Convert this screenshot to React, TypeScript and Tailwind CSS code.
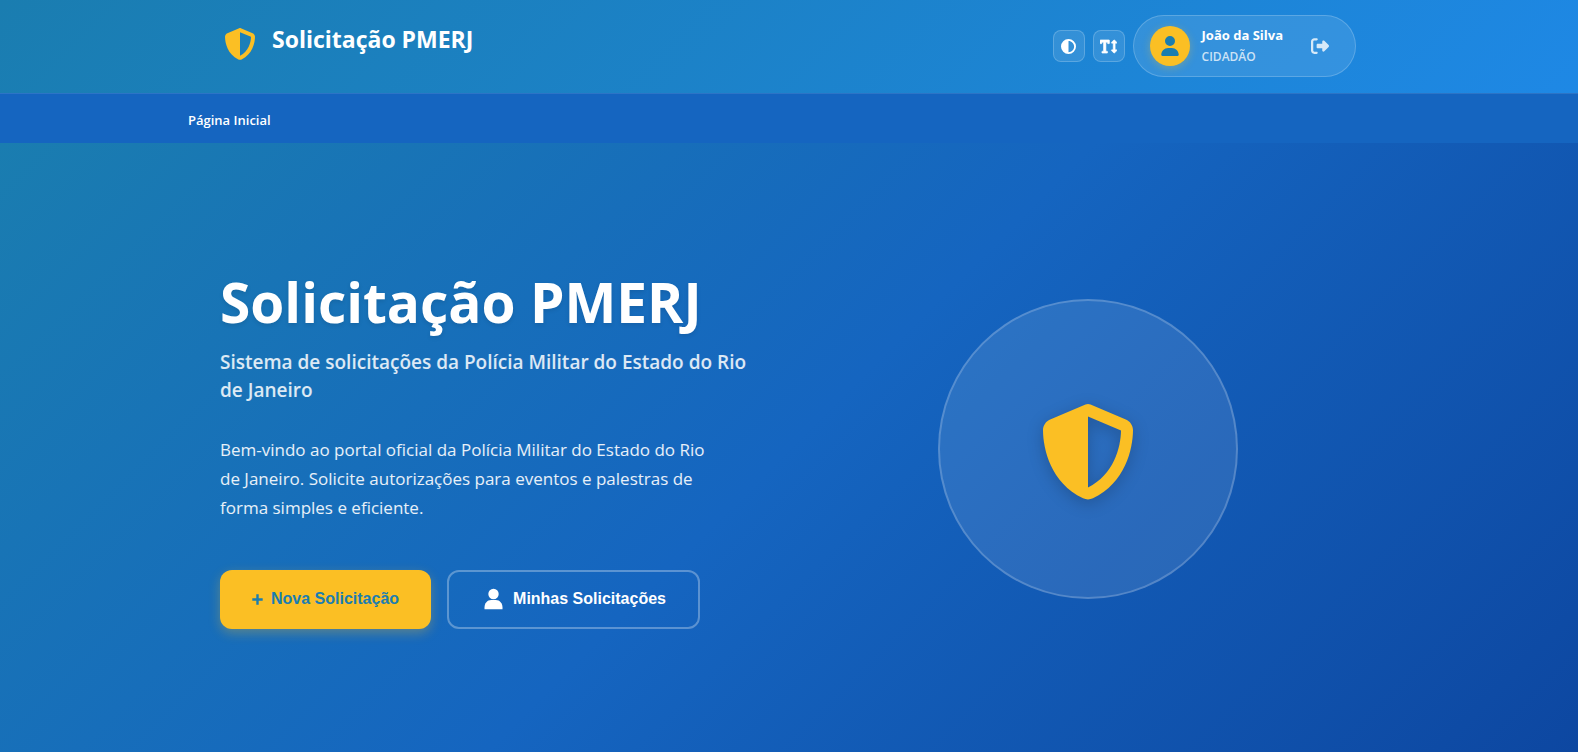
import { FaTextHeight } from "react-icons/fa";
import { FaCircleHalfStroke, FaRightFromBracket, FaShieldHalved, FaUser } from "react-icons/fa6";

const toolButton =
  "flex size-8 items-center justify-center rounded-lg border border-white/20 bg-white/10 text-white";

function PlusIcon() {
  return (
    <svg viewBox="0 0 11 11" className="size-[11px]" fill="currentColor" aria-hidden="true">
      <path d="M4.3 0.3h2.4v4h4v2.4h-4v4H4.3v-4h-4V4.3h4z" />
    </svg>
  );
}

function PersonIcon() {
  return (
    <svg viewBox="0 0 24 24" className="size-6" fill="currentColor" aria-hidden="true">
      <circle cx="12.5" cy="7" r="5.2" />
      <path d="M3.5 22.2v-1.7c0-4.3 2.8-7.6 6.6-7.6h4.8c3.8 0 6.6 3.3 6.6 7.6v1.7z" />
    </svg>
  );
}

function Header() {
  return (
    <header className="bg-[linear-gradient(135deg,#1a7db0,#1e88e5)] pr-0.5">
      <div className="mx-auto flex max-w-[1200px] items-center justify-between px-8 pt-[15px] pb-4">
        <a href="#" className="flex items-center gap-3 text-white">
          <span className="flex size-10 items-center justify-center text-[#fbbf24]">
            <FaShieldHalved className="mb-1 size-8" />
          </span>
          <span className="pb-3.5 text-[23px] leading-8 font-bold">Solicitação PMERJ</span>
        </a>
        <div className="flex items-center gap-2">
          <button type="button" aria-label="Alto contraste" className={toolButton}>
            <FaCircleHalfStroke className="size-[15px]" />
          </button>
          <button type="button" aria-label="Tamanho do texto" className={toolButton}>
            <FaTextHeight className="size-[17px] stroke-current stroke-[20px]" />
          </button>
          <div className="flex items-center gap-3 rounded-full border border-white/20 bg-white/10 py-2 pr-[18px] pl-4">
            <span className="flex size-10 items-center justify-center rounded-full bg-[#fbbf24] text-xl text-[#1a7db0] shadow-[0_2px_8px_rgba(251,191,36,0.3)]">
              <FaUser />
            </span>
            <div className="flex flex-col">
              <span className="text-[13px] leading-[22px] font-bold text-white">João da Silva</span>
              <span className="text-xs leading-[22px] font-semibold text-white/75">CIDADÃO</span>
            </div>
            <button type="button" aria-label="Sair" className="ml-2 p-2 text-lg text-white/80">
              <FaRightFromBracket />
            </button>
          </div>
        </div>
      </div>
    </header>
  );
}

function Hero() {
  return (
    <main className="flex flex-1 items-center bg-[linear-gradient(135deg,#1a7db0,#1565c0_50%,#0d47a1)] pt-0.5 pr-0.5">
      <div className="mx-auto grid w-full max-w-[1200px] grid-cols-2 items-center gap-16 px-8">
        <div className="text-white">
          <h1 className="mb-[13px] text-[55px] leading-[66px] font-bold text-shadow-[0_2px_4px_rgba(0,0,0,0.1)]">
            Solicitação PMERJ
          </h1>
          <h2 className="mb-[31px] text-[19px] leading-7 font-semibold text-white/85">
            Sistema de solicitações da Polícia Militar do Estado do Rio de Janeiro
          </h2>
          <p className="mb-12 max-w-[500px] text-[17px] leading-[29px] text-white/90">
            Bem-vindo ao portal oficial da Polícia Militar do Estado do Rio de Janeiro. Solicite autorizações para
            eventos e palestras de forma simples e eficiente.
          </p>
          <div className="flex gap-4 font-['Liberation_Sans',sans-serif] text-base font-bold">
            <button
              type="button"
              className="flex h-[59px] items-center gap-2 rounded-xl bg-[#fbbf24] px-8 text-[#1a7db0] shadow-[0_4px_12px_rgba(251,191,36,0.3)]"
            >
              <PlusIcon />
              Nova Solicitação
            </button>
            <button
              type="button"
              className="flex h-[59px] items-center gap-2 rounded-xl border-2 border-white/30 px-8"
            >
              <PersonIcon />
              Minhas Solicitações
            </button>
          </div>
        </div>
        <div className="flex justify-center">
          <div className="flex size-[300px] items-center justify-center rounded-full border-2 border-white/20 bg-white/10">
            <FaShieldHalved className="mt-1.5 size-24 text-[#fbbf24] drop-shadow-[0_4px_8px_rgba(0,0,0,0.2)]" />
          </div>
        </div>
      </div>
    </main>
  );
}

export default function App() {
  return (
    <div className="flex min-h-screen flex-col font-['Open_Sans','Noto_Sans',sans-serif]">
      <Header />
      <nav aria-label="Principal" className="border-t border-white/10 bg-[#1565c0] pr-0.5">
        <div className="mx-auto flex max-w-[1200px]">
          <a href="#" className="pt-3.5 pb-2.5 text-[13px] leading-[25px] font-semibold text-white">
            Página Inicial
          </a>
        </div>
      </nav>
      <Hero />
    </div>
  );
}
